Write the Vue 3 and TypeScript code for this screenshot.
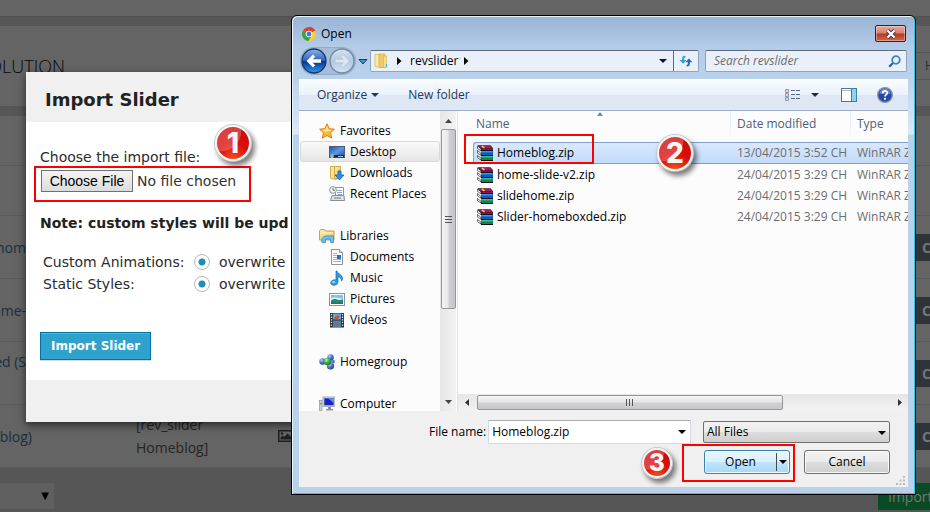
<script setup lang="ts">
import { ref } from 'vue'

interface Place {
  label: string
  icon: string
  root?: boolean
  spaced?: boolean
}

interface ArchiveFile {
  name: string
  modified: string
  type: string
}

const places: Place[] = [
  { label: 'Favorites', icon: 'star', root: true },
  { label: 'Desktop', icon: 'desktop' },
  { label: 'Downloads', icon: 'downloads' },
  { label: 'Recent Places', icon: 'recent' },
  { label: 'Libraries', icon: 'libraries', root: true, spaced: true },
  { label: 'Documents', icon: 'documents' },
  { label: 'Music', icon: 'music' },
  { label: 'Pictures', icon: 'pictures' },
  { label: 'Videos', icon: 'videos' },
  { label: 'Homegroup', icon: 'homegroup', root: true, spaced: true },
  { label: 'Computer', icon: 'computer', root: true, spaced: true },
]

const files: ArchiveFile[] = [
  { name: 'Homeblog.zip', modified: '13/04/2015 3:52 CH', type: 'WinRAR ZIP' },
  { name: 'home-slide-v2.zip', modified: '24/04/2015 3:29 CH', type: 'WinRAR ZIP' },
  { name: 'slidehome.zip', modified: '24/04/2015 3:29 CH', type: 'WinRAR ZIP' },
  { name: 'Slider-homeboxded.zip', modified: '24/04/2015 3:29 CH', type: 'WinRAR ZIP' },
]

const place = ref('Desktop')
const fileName = ref('Homeblog.zip')
const filter = ref('All Files')
const animations = ref('overwrite')
const styles = ref('overwrite')
</script>

<template>
  <div class="page">
    <svg class="sprite" aria-hidden="true">
      <defs>
        <linearGradient id="g-blue" x1="0" y1="0" x2="0" y2="1">
          <stop offset="0" stop-color="#8fb4e4" /><stop offset=".48" stop-color="#2a62bd" />
          <stop offset=".52" stop-color="#08338f" /><stop offset="1" stop-color="#2f9df0" />
        </linearGradient>
        <linearGradient id="g-pale" x1="0" y1="0" x2="0" y2="1">
          <stop offset="0" stop-color="#d5e1ef" /><stop offset=".5" stop-color="#b4c8df" />
          <stop offset="1" stop-color="#d3e2f3" />
        </linearGradient>
        <linearGradient id="g-folder" x1="0" y1="0" x2="1" y2="1">
          <stop offset="0" stop-color="#fbeeb0" /><stop offset="1" stop-color="#e3bf57" />
        </linearGradient>
        <linearGradient id="g-screen" x1="0" y1="0" x2="1" y2="1">
          <stop offset="0" stop-color="#1c4fae" /><stop offset=".5" stop-color="#5f97e2" />
          <stop offset="1" stop-color="#153f92" />
        </linearGradient>
        <radialGradient id="g-ball" cx=".35" cy=".3" r=".8">
          <stop offset="0" stop-color="#b8ccff" /><stop offset=".5" stop-color="#4a6fd0" />
          <stop offset="1" stop-color="#1a348c" />
        </radialGradient>
        <radialGradient id="g-green" cx=".35" cy=".3" r=".8">
          <stop offset="0" stop-color="#b4f0a8" /><stop offset=".5" stop-color="#38ae40" />
          <stop offset="1" stop-color="#127022" />
        </radialGradient>
      </defs>
      <symbol id="i-star" viewBox="0 0 16 16">
        <path d="M8 .8l2.200 4.900 5.200.5-3.900 3.600 1.200 5.400L8 12.500l-4.700 2.700 1.200-5.400L.6 6.200l5.200-.5z" fill="#fbb93a" stroke="#e07d12" stroke-width="1" />
        <path d="M8 2.800l1.400 3.800 3.600.4-6.400 2-3.400-2 3.400-.4z" fill="#fde29a" />
      </symbol>
      <symbol id="i-desktop" viewBox="0 0 16 16">
        <rect x=".5" y="2.500" width="15" height="11" fill="url(#g-screen)" stroke="#4b5d7a" />
        <rect x="1" y="11" width="14" height="2.500" fill="#1a2c50" />
        <circle cx="3" cy="12" r="2" fill="#5cc0f0" /><rect x="2" y="12" width="2" height="2" fill="#e8b23a" />
        <rect x="9" y="12" width="5" height="1" fill="#a7c0e8" />
      </symbol>
      <symbol id="i-downloads" viewBox="0 0 16 16">
        <path d="M1.500 1.500h5l1 1.500v11.500l-6-1z" fill="#f7e49b" stroke="#d5ac4a" />
        <path d="M5.500 1.500h6v12h-6z" fill="url(#g-folder)" stroke="#d3a846" />
        <path d="M9 6h3v4h3l-4.500 5L6 10h3z" fill="#2f8fe0" stroke="#1462ae" stroke-width=".8" />
      </symbol>
      <symbol id="i-recent" viewBox="0 0 16 16">
        <path d="M6.500 1.500h8v11h-8z" fill="#fff" stroke="#8f959c" />
        <path d="M8 4.500h5M8 6.500h5M9 8.500h4" stroke="#8fa9c8" />
        <path d="M3 9.500h12l.5 5H1.500z" fill="#dfe3e8" stroke="#868d95" />
        <path d="M5 12h7" stroke="#6f7881" />
        <circle cx="4" cy="4" r="3.400" fill="#f4f7fa" stroke="#8a929b" /><path d="M4 2v2.300h1.800" fill="none" stroke="#444" stroke-width=".8" />
      </symbol>
      <symbol id="i-libraries" viewBox="0 0 16 16">
        <path d="M.5 3l1-1.500h4l1 1.500h8.500v9H.5z" fill="url(#g-folder)" stroke="#cda43e" />
        <path d="M2 5h12" stroke="#fff6cc" />
        <path d="M3 14.500c-1-4 1-6.500 5-6.500h6.500v6.500h-3v-3.500H6.500v3.500z" fill="#6fc4ee" stroke="#2e8bc2" stroke-width=".8" />
      </symbol>
      <symbol id="i-documents" viewBox="0 0 16 16">
        <path d="M2.500.5h8l3 3v12h-11z" fill="#fff" stroke="#8c949e" />
        <path d="M10.500.5v3h3" fill="#dfe6ee" stroke="#8c949e" />
        <path d="M4 4.500h4M4 6.500h4M4 8.500h4M4 10.500h8M4 12.500h8" stroke="#9bb2d0" />
        <rect x="8" y="6" width="4" height="4" fill="#2f6fc2" />
      </symbol>
      <symbol id="i-music" viewBox="0 0 16 16">
        <path d="M8 1c.5 3 5 3.500 5.500 7 .1 1.500-.5 2.500-1 3 .2-2.500-1.500-4-3.500-4.300V12c0 2-1.800 3.300-4 3.300-2 0-3.300-1-3.300-2.500 0-1.800 1.800-3 3.800-3 .7 0 1.200.1 1.500.3V1z" fill="#2f9be2" stroke="#1670b4" stroke-width=".7" />
        <ellipse cx="4.600" cy="12" rx="1.800" ry="1" fill="#9bd6fa" />
      </symbol>
      <symbol id="i-pictures" viewBox="0 0 16 16">
        <rect x=".5" y="2.500" width="15" height="12" fill="#fff" stroke="#8d939a" />
        <rect x="2" y="4" width="12" height="9" fill="#79c3f0" />
        <path d="M2 7.500c3-1.500 5-1 12 .5v3H2z" fill="#e0f3fb" />
        <path d="M2 9.500c3-2 5-1.800 7-.8 2 .8 3.500.2 5-.7v5H2z" fill="#2c8a62" /><path d="M2 11.500h12v1.500H2z" fill="#2566a8" />
      </symbol>
      <symbol id="i-videos" viewBox="0 0 16 16">
        <rect x="1" y="1" width="14" height="14.500" fill="#2d2f33" />
        <rect x="4" y="1.500" width="8" height="6" fill="#5ea9dd" /><rect x="4" y="8.500" width="8" height="6.500" fill="#3d86c5" />
        <path d="M5 7c1-4 4-4 6-3l-2 3zM5 14c0-3 3-4 6-3l-2 3z" fill="#c8552b" />
        <path d="M2.500 2v13M13.500 2v13" stroke="#e3e6ea" stroke-width="1.400" stroke-dasharray="1.300 1.300" />
      </symbol>
      <symbol id="i-homegroup" viewBox="0 0 16 16">
        <circle cx="3.600" cy="7.500" r="3.300" fill="url(#g-ball)" /><circle cx="11.500" cy="3.500" r="3.200" fill="url(#g-ball)" />
        <circle cx="11.500" cy="12" r="3.600" fill="url(#g-ball)" /><circle cx="14" cy="7.500" r="2" fill="#5a80dc" />
        <circle cx="8.500" cy="7.500" r="3.700" fill="url(#g-green)" />
      </symbol>
      <symbol id="i-computer" viewBox="0 0 16 16">
        <rect x="4" y="1" width="12" height="9.500" fill="#d6dade" stroke="#9aa0a6" stroke-width=".8" />
        <rect x="5.300" y="2.300" width="9.400" height="7" fill="#1324c4" /><path d="M9 2.300h5.700v5z" fill="#6e86f2" />
        <path d="M9 11h3v2h2v1.500H7V13h2z" fill="#8c9299" />
        <rect x=".5" y="4.500" width="2.500" height="10" fill="#cfd3d8" stroke="#8c9299" stroke-width=".7" /><rect x="1" y="7" width="1.500" height="1.500" fill="#49b13a" />
      </symbol>
      <symbol id="i-archive" viewBox="0 0 16 16">
        <path d="M1 1h12.500L16 4v1.500H4z" fill="#8c1257" />
        <path d="M1 .5h12.500L16 3.500H4z" fill="#a81a6c" stroke="#2a0a1c" stroke-width=".5" />
        <path d="M4 6h12v4H4z" fill="#1456c4" /><path d="M4 6.800h11.500" stroke="#58b0f4" />
        <path d="M4 11h12v4H4z" fill="#0e8457" /><path d="M4 11.800h11.500" stroke="#59d8a2" />
        <path d="M.5 1l3.500 3v1.700L.5 3.500zM.5 5.500L4 8.500v1.700L.5 8zM.5 10.500L4 13.300V15L.5 12.700z" fill="#fff" stroke="#111" stroke-width=".6" />
        <path d="M4 5.500h12M4 10.500h12M4 15.500h12" stroke="#111" />
        <path d="M5 1.200l2.500 1.600" stroke="#f4d83a" stroke-width="1.600" />
      </symbol>
    </svg>

    <!-- Dimmed admin screen behind the modal -->
    <div class="admin">
      <div class="topbar"></div>
      <header class="heading">
        <div class="heading-clip"><h1>OLUTION</h1></div>
        <a class="heading-link" href="#">H</a>
      </header>
      <div class="sliders">
        <div class="slider-row short"></div>
        <div class="slider-row short"></div>
        <div class="slider-row">
          <div class="slider-name"><a href="#">hom</a></div>
          <button class="slider-btn" type="button">C</button>
        </div>
        <div class="slider-row">
          <div class="slider-name"><a href="#">ome-</a></div>
          <button class="slider-btn" type="button">C</button>
        </div>
        <div class="slider-row">
          <div class="slider-name raised"><a href="#">ed (S</a></div>
          <button class="slider-btn" type="button">C</button>
        </div>
        <div class="slider-row">
          <div class="slider-name last"><a href="#">blog)</a></div>
          <div class="slider-code">[rev_slider Homeblog]</div>
          <svg class="slider-pic" viewBox="0 0 16 12" aria-hidden="true">
            <rect x=".75" y=".75" width="14.500" height="10.500" fill="none" stroke="#1d1f21" stroke-width="1.500" />
            <path d="M2.500 9.500V7.500l2-2 1.500 1.500 3.500-3.500 4 4v2z" fill="#1d1f21" /><circle cx="4" cy="3.500" r="1.200" fill="#1d1f21" />
          </svg>
          <button class="slider-btn" type="button">C</button>
        </div>
      </div>
      <div class="admin-foot">
        <button class="page-size" type="button" aria-label="Rows per page">▼</button>
        <button class="import-btn" type="button">Import</button>
      </div>
    </div>

    <!-- Import form -->
    <form class="modal" @submit.prevent>
      <h2 class="modal-title">Import Slider</h2>
      <div class="modal-body">
        <label class="line" for="import-file">Choose the import file:</label>
        <input id="import-file" class="file" type="file" />
        <p class="note">Note: custom styles will be upd</p>
        <div class="option">
          <span class="option-name">Custom Animations:</span>
          <label><input v-model="animations" type="radio" name="animations" value="overwrite" />overwrite</label>
        </div>
        <div class="option">
          <span class="option-name">Static Styles:</span>
          <label><input v-model="styles" type="radio" name="styles" value="overwrite" />overwrite</label>
        </div>
        <button class="primary" type="submit">Import Slider</button>
      </div>
      <div class="modal-foot"></div>
      <div class="mark mark-file"></div>
      <div class="badge badge-1">1</div>
    </form>

    <!-- File picker window -->
    <section class="dialog" role="dialog" aria-label="Open">
      <div class="titlebar">
        <svg class="chrome" viewBox="0 0 14 14" aria-hidden="true">
          <circle cx="7" cy="7" r="7" fill="#f6cf2e" />
          <path d="M7 7L.94 3.500A7 7 0 0 1 13.060 3.500z" fill="#dd4132" />
          <path d="M7 0a7 7 0 0 1 6.300 4H7z" fill="#dd4132" />
          <path d="M.94 3.500A7 7 0 0 0 6.500 14L9.600 8.500 7 7z" fill="#38a04a" />
          <circle cx="7" cy="7" r="3.300" fill="#fff" /><circle cx="7" cy="7" r="2.400" fill="#3b78d8" />
        </svg>
        <span class="title-text">Open</span>
        <button class="close" type="button" aria-label="Close">
          <svg viewBox="0 0 12 10" aria-hidden="true">
            <path d="M2.500 1.500l7 7M9.500 1.500l-7 7" stroke="#4a2a30" stroke-width="4" />
            <path d="M2.500 1.500l7 7M9.500 1.500l-7 7" stroke="#fff" stroke-width="2.400" />
          </svg>
        </button>
      </div>

      <div class="navbar">
        <div class="travel">
          <button type="button" aria-label="Back">
            <svg viewBox="0 0 26 26" aria-hidden="true">
              <circle cx="13" cy="13" r="12" fill="url(#g-blue)" stroke="#1c3763" stroke-width="1.300" />
              <path d="M5.500 13l6.500-6.500 2.200 2.200-2.500 2.500H20v3.600h-8.300l2.500 2.500-2.200 2.200z" fill="#fff" />
            </svg>
          </button>
          <button type="button" aria-label="Forward">
            <svg viewBox="0 0 26 26" aria-hidden="true">
              <circle cx="13" cy="13" r="12" fill="url(#g-pale)" stroke="#73889f" stroke-width="1.300" />
              <path d="M20.500 13L14 6.500l-2.200 2.200 2.500 2.500H6v3.600h8.300l-2.500 2.500 2.200 2.200z" fill="#dfe7f1" stroke="#b4c3d4" stroke-width=".8" />
            </svg>
          </button>
        </div>
        <button class="history" type="button" aria-label="Recent pages">
          <svg viewBox="0 0 10 7" aria-hidden="true"><path d="M1 1.500h8L5 6z" fill="#3f97c8" stroke="#183e6c" /></svg>
        </button>
        <div class="address">
          <svg class="addr-folder" viewBox="0 0 14 16" aria-hidden="true">
            <path d="M1 1.500h5l1 13-6-1z" fill="#fbe9a0" stroke="#dcb95a" stroke-width=".8" />
            <path d="M5 1h6v13.500H5z" fill="#eecb68" stroke="#d5b04f" stroke-width=".8" /><path d="M9.500 3h3v11.500h-3z" fill="#f7dd8a" stroke="#d5b04f" stroke-width=".6" />
            <path d="M12.500 11v3" stroke="#3ca4d8" />
          </svg>
          <svg class="crumb" viewBox="0 0 5 8" aria-hidden="true"><path d="M0 0l4.500 4L0 8z" fill="#000" /></svg>
          <span>revslider</span>
          <svg class="crumb" viewBox="0 0 5 8" aria-hidden="true"><path d="M0 0l4.500 4L0 8z" fill="#000" /></svg>
          <button class="addr-drop" type="button" aria-label="Previous locations">
            <svg viewBox="0 0 8 4" aria-hidden="true"><path d="M0 0h8L4 4z" fill="#0b0b57" /></svg>
          </button>
          <button class="refresh" type="button" aria-label="Refresh">
            <svg viewBox="0 0 14 12" aria-hidden="true">
              <path d="M6 .8C3.500.8 3.200 2 3.200 5H.5l3.700 3.700L7.500 5H5.200c0-2 .1-2.800 1.800-3z" fill="#3b9bd6" />
              <path d="M8 11.500c2.500 0 2.900-1.500 2.900-4.300h2.600L9.900 3.500 6.500 7.200h2.400c0 2-.1 2.900-1.700 3.100z" fill="#2866b4" />
            </svg>
          </button>
        </div>
        <label class="search">
          <input type="search" placeholder="Search revslider" aria-label="Search revslider" />
          <svg viewBox="0 0 13 13" aria-hidden="true">
            <circle cx="8" cy="5" r="3.800" fill="#e8f4fc" stroke="#3b84cc" stroke-width="1.800" /><path d="M5 8l-3.800 3.800" stroke="#2b5fae" stroke-width="2.200" />
          </svg>
        </label>
      </div>

      <div class="toolbar">
        <button class="tool organize" type="button">Organize
          <svg viewBox="0 0 8 4" aria-hidden="true"><path d="M0 0h8L4 4z" fill="#1e3a5f" /></svg>
        </button>
        <button class="tool" type="button">New folder</button>
        <div class="tool-icons">
          <button type="button" aria-label="Change your view">
            <svg width="16" height="14" viewBox="0 0 16 14" aria-hidden="true">
              <path d="M.5 1.500h3v3h-3zM.5 5.500h3v3h-3zM.5 9.500h3v3h-3z" fill="#fff" stroke="#8e9bb0" />
              <path d="M1.500 3h1" stroke="#3d9a4c" /><path d="M1.500 7h1" stroke="#d03a2c" /><path d="M1.500 11h1" stroke="#2d62c4" />
              <path d="M6 2.500h10M6 6.500h10M6 10.500h10" stroke="#5c6b84" stroke-dasharray="4 1" />
            </svg>
          </button>
          <button class="view-drop" type="button" aria-label="More view options">
            <svg width="8" height="4" viewBox="0 0 8 4" aria-hidden="true"><path d="M0 0h8L4 4z" fill="#1e2c45" /></svg>
          </button>
          <button class="pane" type="button" aria-label="Show the preview pane">
            <svg width="16" height="14" viewBox="0 0 16 14" aria-hidden="true">
              <rect x=".5" y=".5" width="15" height="13" fill="#fff" stroke="#5a7290" /><path d="M1 2.500h9" stroke="#a9b9cc" />
              <rect x="10.500" y=".5" width="5" height="13" fill="#8fd2ea" stroke="#3a7fa6" />
            </svg>
          </button>
          <button type="button" aria-label="Get help">
            <svg width="16" height="16" viewBox="0 0 16 16" aria-hidden="true">
              <circle cx="8" cy="8" r="7.300" fill="#2747ae" stroke="#8791a3" stroke-width="1.400" />
              <path d="M2.500 7a5.500 5.500 0 0 1 11 0z" fill="#6484d6" />
              <path d="M5.700 6.200c0-3 4.600-3 4.600-.3 0 1.700-2.300 1.800-2.300 3.600" fill="none" stroke="#fff" stroke-width="1.700" /><circle cx="8" cy="11.800" r="1.100" fill="#fff" />
            </svg>
          </button>
        </div>
      </div>

      <div class="panes">
        <nav class="tree" aria-label="Places">
          <ul>
            <li v-for="p in places" :key="p.label" :class="{ root: p.root, spaced: p.spaced, current: p.label === place }">
              <a href="#" @click.prevent="place = p.label">
                <svg aria-hidden="true"><use :href="'#i-' + p.icon" /></svg>{{ p.label }}
              </a>
            </li>
          </ul>
        </nav>
        <div class="vscroll" aria-hidden="true">
          <svg viewBox="0 0 7 4"><path d="M0 4h7L3.500 0z" fill="#444" /></svg>
          <div class="vthumb"><i></i><i></i><i></i></div>
          <svg viewBox="0 0 7 4"><path d="M0 0h7L3.500 4z" fill="#444" /></svg>
        </div>
        <div class="files">
          <svg class="sorted" viewBox="0 0 6 4" aria-hidden="true"><path d="M0 4h6L3 0z" fill="#5d93b8" /></svg>
          <table>
            <thead>
              <tr><th class="c-name">Name</th><th class="c-date">Date modified</th><th class="c-type">Type</th></tr>
            </thead>
            <tbody>
              <tr v-for="f in files" :key="f.name" :class="{ picked: f.name === fileName }" @click="fileName = f.name">
                <td><span class="entry"><svg aria-hidden="true"><use href="#i-archive" /></svg>{{ f.name }}</span></td>
                <td class="meta">{{ f.modified }}</td>
                <td class="meta">{{ f.type }}</td>
              </tr>
            </tbody>
          </table>
          <div class="hscroll" aria-hidden="true">
            <svg viewBox="0 0 4 7"><path d="M4 0v7L0 3.500z" fill="#333" /></svg>
            <div class="htrack"><div class="hthumb"><i></i><i></i><i></i></div></div>
            <svg viewBox="0 0 4 7"><path d="M0 0v7l4-3.500z" fill="#333" /></svg>
          </div>
          <div class="mark mark-entry"></div>
          <div class="badge badge-2">2</div>
        </div>
      </div>

      <div class="actions">
        <div class="action-row">
          <label for="file-name">File name:</label>
          <div class="name-box">
            <input id="file-name" v-model="fileName" type="text" />
            <button type="button" aria-label="Previous file names">
              <svg viewBox="0 0 8 4" aria-hidden="true"><path d="M0 0h8L4 4z" fill="#000" /></svg>
            </button>
          </div>
          <div class="filter">
            <select v-model="filter" aria-label="File type"><option>All Files</option></select>
            <svg viewBox="0 0 8 4" aria-hidden="true"><path d="M0 0h8L4 4z" fill="#000" /></svg>
          </div>
        </div>
        <div class="action-row buttons">
          <div class="split">
            <button class="split-main" type="button">Open</button>
            <button class="split-drop" type="button" aria-label="Open options">
              <svg viewBox="0 0 8 4" aria-hidden="true"><path d="M0 0h8L4 4z" fill="#000" /></svg>
            </button>
          </div>
          <button class="cancel" type="button">Cancel</button>
        </div>
        <svg class="grip" viewBox="0 0 9 9" aria-hidden="true">
          <path d="M7 0h2v2H7zM7 3.500h2v2H7zM7 7h2v2H7zM3.500 3.500h2v2h-2zM3.500 7h2v2h-2zM0 7h2v2H0z" fill="#bcbcbc" />
        </svg>
        <div class="mark mark-open"></div>
        <div class="badge badge-3">3</div>
      </div>
    </section>
  </div>
</template>

<style>
body {
  background: #565656;
}
</style>

<style scoped>
* {
  box-sizing: border-box;
}
.page {
  position: relative;
  min-height: 100vh;
  overflow: hidden;
  font-family: 'Open Sans', 'Noto Sans', sans-serif;
}
.sprite {
  position: absolute;
  width: 0;
  height: 0;
}
button {
  margin: 0;
  padding: 0;
  border: 0;
  background: none;
  font: inherit;
  color: inherit;
}
a {
  color: inherit;
  text-decoration: none;
}
svg {
  display: block;
  flex: none;
}

/* admin screen */
.topbar {
  height: 17px;
  background: #646464;
  border-bottom: 1px solid #505050;
}
.heading {
  display: flex;
  justify-content: space-between;
  align-items: center;
  height: 80px;
  margin: 9px 0 10px;
  background: #646464;
}
.heading-clip {
  display: flex;
  justify-content: flex-end;
  width: 65px;
  overflow: hidden;
}
.heading h1 {
  margin: 0;
  font-size: 18px;
  font-weight: 300;
  line-height: 28px;
  color: #080808;
}
.heading-link {
  width: 24px;
  padding-left: 19px;
  border: solid #555;
  border-width: 1px 0;
  font-size: 12px;
  line-height: 26px;
  color: #26323a;
  overflow: hidden;
}
.sliders {
  background: #646464;
}
.slider-row {
  display: flex;
  align-items: center;
  height: 63px;
  border-bottom: 1px solid #5a5a5a;
  font-size: 14px;
}
.slider-row.short {
  height: 50px;
}
.slider-name {
  display: flex;
  justify-content: flex-end;
  width: 26px;
  overflow: hidden;
  white-space: nowrap;
  color: #18313f;
}
.slider-name.raised {
  padding-bottom: 24px;
}
.slider-name.last {
  width: 32px;
}
.slider-code {
  width: 90px;
  margin: 0 52px 0 104px;
  line-height: 23px;
  color: #262626;
}
.slider-pic {
  width: 16px;
  height: 12px;
}
.slider-btn {
  width: 20px;
  height: 27px;
  margin-left: auto;
  padding-left: 12px;
  background: #303438;
  font-weight: 700;
  text-align: left;
  color: #71767a;
  overflow: hidden;
}
.admin-foot {
  display: flex;
  justify-content: space-between;
  padding-top: 15px;
}
.page-size {
  width: 54px;
  height: 26px;
  padding: 0 5px 2px 0;
  background: #5f5f5f;
  font-family: 'DejaVu Sans', sans-serif;
  font-size: 10px;
  text-align: right;
  color: #000;
}
.import-btn {
  width: 52px;
  height: 27px;
  padding-left: 10px;
  background: #0a4a25;
  font-size: 14px;
  line-height: 20px;
  text-align: left;
  white-space: nowrap;
  color: #6d7a72;
  overflow: hidden;
}

/* import form */
.modal {
  position: absolute;
  top: 72px;
  left: 26px;
  right: 26px;
  background: #fff;
  box-shadow: 0 3px 8px rgba(0, 0, 0, 0.6);
  font-family: 'DejaVu Sans', Verdana, sans-serif;
  font-size: 14px;
  line-height: 22px;
  color: #2b2b2b;
}
.modal-title {
  margin: 0;
  padding: 17px 19px 11px;
  background: #f0f0f0;
  font-size: 18px;
  font-weight: 700;
  line-height: 22px;
  color: #222;
}
.modal-body {
  padding: 24px 14px 20px;
}
.line {
  display: block;
}
.file {
  display: block;
  margin: 2px 0 0 1px;
  font: inherit;
  color: #333;
}
.file::file-selector-button {
  width: 92px;
  height: 22px;
  margin: 0 4px 0 0;
  padding: 0;
  border: 1px solid #707070;
  border-radius: 0;
  background: linear-gradient(#f4f4f4, #dcdcdc);
  font-family: 'Liberation Sans', Arial, sans-serif;
  font-size: 14px;
  line-height: 18px;
  color: #000;
}
.note {
  margin: 20px 0 17px;
  font-weight: 700;
  white-space: nowrap;
  color: #222;
}
.option {
  display: flex;
  padding-left: 3px;
}
.option-name {
  width: 151px;
}
.option label {
  display: flex;
  align-items: center;
  gap: 9px;
}
.option input {
  appearance: none;
  width: 16px;
  height: 16px;
  margin: 0;
  border: 1px solid #b4b9be;
  border-radius: 50%;
  background: radial-gradient(circle, #1e8cbe 0 3px, #fff 4px);
}
.primary {
  display: block;
  height: 28px;
  margin-top: 37px;
  padding: 0 10px;
  border: 1px solid #0074a2;
  background: #2ea2cc;
  box-shadow: inset 0 1px 0 rgba(120, 200, 230, 0.5), 0 1px 0 rgba(0, 0, 0, 0.15);
  font-size: 12px;
  font-weight: 700;
  color: #fff;
}
.modal-foot {
  height: 42px;
  background: #f0f0f0;
}

/* file picker */
.dialog {
  position: absolute;
  top: 15px;
  left: 291px;
  right: 14px;
  padding: 1px 7px 7px;
  border: 1px solid #000;
  border-radius: 6px 6px 0 0;
  background: linear-gradient(#98b4d4, #b4cce8 32px, #bad1eb 60px, #dbe8f6 118px, #b9d1ea 119px);
  box-shadow: inset 1px 1px 0 #e8f4fc, inset -1px -1px 0 #31c5e6;
  font-size: 12px;
  line-height: 16px;
  color: #000;
}
.titlebar {
  display: flex;
  align-items: center;
  height: 33px;
  padding: 0 2px 0 3px;
}
.chrome {
  width: 14px;
  height: 14px;
}
.title-text {
  margin-left: 5px;
}
.close {
  display: flex;
  align-items: center;
  justify-content: center;
  width: 31px;
  height: 17px;
  margin-left: auto;
  border: 1px solid #4c1620;
  border-radius: 2px;
  background: linear-gradient(#e5a99c, #d58271 48%, #b43a20 52%, #d1694f);
  box-shadow: inset 0 0 0 1px rgba(255, 255, 255, 0.35);
}
.close svg {
  width: 12px;
  height: 10px;
}
.navbar {
  display: flex;
  align-items: center;
  height: 22px;
  margin: 0 1px 7px 0;
}
.travel {
  display: flex;
  gap: 2px;
  margin-left: 2px;
  border-radius: 13px;
  background: #a5bddb;
  box-shadow: 0 0 0 1px #93acca;
}
.travel svg {
  width: 26px;
  height: 26px;
}
.history {
  margin: 0 2px 0 3px;
}
.history svg {
  width: 10px;
  height: 7px;
}
.address,
.search {
  display: flex;
  align-items: center;
  height: 22px;
  border: 1px solid #8ea4bf;
  border-top-color: #5c6a7e;
  border-radius: 2px;
  background: #e9f0fa;
}
.address {
  flex: 1;
  margin-right: 6px;
}
.addr-folder {
  width: 14px;
  height: 16px;
  margin: 0 9px 0 3px;
}
.crumb {
  width: 5px;
  height: 8px;
}
.address span {
  margin: 0 6px 0 8px;
}
.addr-drop {
  display: flex;
  align-items: center;
  height: 20px;
  margin-left: auto;
  padding: 0 6px;
}
.addr-drop svg,
.organize svg,
.name-box svg,
.filter svg,
.split svg {
  width: 8px;
  height: 4px;
}
.refresh {
  display: flex;
  align-items: center;
  justify-content: center;
  width: 25px;
  height: 20px;
  border-left: 1px solid #5c6a7e;
}
.refresh svg {
  width: 14px;
  height: 12px;
}
.search {
  width: 202px;
  padding-right: 5px;
}
.search input {
  flex: 1;
  min-width: 0;
  padding: 0 0 0 8px;
  border: 0;
  background: none;
  outline: 0;
  font: inherit;
  font-style: italic;
}
.search input::placeholder {
  color: #6d6d6d;
}
.search svg {
  width: 13px;
  height: 13px;
}
.toolbar {
  display: flex;
  align-items: center;
  gap: 29px;
  height: 32px;
  padding: 0 15px 0 18px;
  border-bottom: 1px solid #a0afc3;
  background: linear-gradient(#fafcfe, #eaf2fb 50%, #dce6f4 52%, #dfe9f6);
  box-shadow: inset 0 1px 0 #fff;
  color: #1e395b;
}
.organize {
  display: flex;
  align-items: center;
  gap: 4px;
}
.tool-icons {
  display: flex;
  align-items: center;
  margin-left: auto;
}
.view-drop {
  margin: 0 22px 0 10px;
}
.pane {
  margin-right: 20px;
}
.panes {
  display: flex;
  height: 300px;
  background: #fcfcfc;
}
.tree {
  width: 141px;
  padding: 9px 0 0 1px;
  overflow: hidden;
}
.tree ul {
  margin: 0;
  padding: 0;
  list-style: none;
}
.tree li {
  padding-left: 28px;
  border: 1px solid transparent;
  border-radius: 3px;
}
.tree li.root {
  padding-left: 18px;
}
.tree li.spaced {
  margin-top: 21px;
}
.tree li.current {
  border-color: #d9d9d9;
  background: linear-gradient(#fafafa, #e6e6e6);
}
.tree a {
  display: flex;
  align-items: center;
  gap: 5px;
  height: 19px;
  white-space: nowrap;
}
.tree svg,
.entry svg {
  width: 16px;
  height: 16px;
}
.vscroll {
  display: flex;
  flex-direction: column;
  align-items: center;
  width: 16px;
  padding: 8px 0 7px;
  background: linear-gradient(90deg, #e6e6e6, #f2f2f2);
}
.vscroll > svg {
  width: 7px;
  height: 4px;
}
.vthumb {
  display: flex;
  flex-direction: column;
  align-items: center;
  justify-content: center;
  gap: 2px;
  width: 15px;
  height: 180px;
  margin: 6px 0 auto;
  border: 1px solid #979797;
  border-radius: 2px;
  background: linear-gradient(90deg, #f5f5f5, #e6e6e8 48%, #d2d2d5 52%, #c4c4c8);
}
.vthumb i {
  width: 7px;
  height: 1px;
  background: #555;
}
.files {
  position: relative;
  display: flex;
  flex: 1;
  flex-direction: column;
  min-width: 0;
  margin-left: 1px;
  border-left: 1px solid #d6e5f5;
}
.sorted {
  position: absolute;
  top: 1px;
  left: 139px;
  width: 6px;
  height: 4px;
}
.files table {
  width: calc(100% - 15px);
  margin-left: 15px;
  table-layout: fixed;
  border-collapse: separate;
  border-spacing: 0;
}
.files th {
  height: 31px;
  padding: 0 7px 5px;
  background: linear-gradient(#dfebf7, #f4f8fc) 0 0 / 1px 24px no-repeat;
  font-weight: 400;
  text-align: left;
  color: #4c607a;
}
.files th.c-name {
  padding-left: 3px;
  background: none;
}
.c-date {
  width: 120px;
}
.c-type {
  width: 58px;
}
.files td {
  height: 21px;
  padding: 0;
  white-space: nowrap;
}
.files td.meta {
  padding-left: 7px;
  overflow: hidden;
  color: #6d6d6d;
}
.entry {
  display: flex;
  align-items: center;
  gap: 4px;
  padding-left: 4px;
}
.files .picked td {
  height: 22px;
  background: linear-gradient(#dce9fc, #c1dafb);
  box-shadow: inset 0 1px 0 #7da2ce, inset 0 -1px 0 #7da2ce;
}
.files .picked td:first-child {
  border-radius: 3px 0 0 3px;
  box-shadow: inset 1px 1px 0 #7da2ce, inset 0 -1px 0 #7da2ce;
}
.hscroll {
  display: flex;
  align-items: center;
  height: 17px;
  margin-top: auto;
  padding: 0 6px 0 7px;
  background: linear-gradient(#e6e6e6, #f2f2f2);
}
.hscroll > svg {
  width: 4px;
  height: 7px;
}
.htrack {
  flex: 1;
  margin: 0 8px;
}
.hthumb {
  display: flex;
  align-items: center;
  justify-content: center;
  gap: 2px;
  width: 74%;
  height: 15px;
  border: 1px solid #979797;
  border-radius: 2px;
  background: linear-gradient(#f5f5f5, #e4e4e6 48%, #d2d2d5 52%, #c8c8cc);
}
.hthumb i {
  width: 1px;
  height: 7px;
  background: #555;
}
.actions {
  position: relative;
  padding: 9px 18px 13px 130px;
  background: #f0f0f0;
}
.action-row {
  display: flex;
  align-items: center;
}
.name-box {
  display: flex;
  flex: 1;
  align-items: center;
  height: 24px;
  margin: 0 12px 0 2px;
  border: 1px solid #d5dbe3;
  border-top-color: #abadb3;
  background: #fff;
}
.name-box input {
  flex: 1;
  min-width: 0;
  padding: 0 0 0 3px;
  border: 0;
  outline: 0;
  background: none;
  font: inherit;
}
.name-box button {
  padding: 6px 4px;
}
.filter {
  position: relative;
  width: 187px;
}
.filter select {
  appearance: none;
  width: 100%;
  height: 22px;
  margin: 0;
  padding: 0 3px;
  border: 1px solid #707070;
  border-radius: 2px;
  background: linear-gradient(#f2f2f2, #ebebeb 50%, #dddddd 51%, #cfcfcf);
  font: inherit;
  color: #000;
}
.filter svg {
  position: absolute;
  top: 10px;
  right: 4px;
  pointer-events: none;
}
.buttons {
  justify-content: flex-end;
  gap: 14px;
  margin-top: 6px;
}
.split,
.cancel {
  width: 86px;
  height: 24px;
  border: 1px solid #707070;
  border-radius: 3px;
  background: linear-gradient(#f2f2f2, #ebebeb 49%, #dddddd 51%, #cfcfcf);
  box-shadow: inset 0 0 0 1px rgba(255, 255, 255, 0.8);
}
.split {
  display: flex;
  align-items: center;
  border-color: #3c7fb1;
  background: linear-gradient(#eaf6fd, #d9f0fc 49%, #bee6fd 51%, #a7d9f5);
}
.split-main {
  flex: 1;
}
.split-drop {
  display: flex;
  align-items: center;
  height: 18px;
  padding: 0 2px;
  border-left: 1px solid #4a4a4a;
}
.grip {
  position: absolute;
  right: 3px;
  bottom: 2px;
  width: 9px;
  height: 9px;
}

/* walkthrough marks */
.mark {
  position: absolute;
  border: 2px solid #f00;
  pointer-events: none;
}
.mark-file {
  top: 94px;
  left: 8px;
  width: 217px;
  height: 36px;
}
.mark-entry {
  top: 23px;
  left: 6px;
  width: 130px;
  height: 30px;
}
.mark-open {
  top: 33px;
  right: 113px;
  width: 113px;
  height: 38px;
}
.badge {
  position: absolute;
  display: flex;
  align-items: center;
  justify-content: center;
  width: 36px;
  height: 36px;
  border: 2px solid #f3f3f3;
  border-radius: 50%;
  background:
    radial-gradient(ellipse at 15% 10%, rgba(255, 255, 255, 0.22) 0 50%, transparent 52%),
    radial-gradient(circle at 50% 100%, #f0501c, #dc0d0d 45%, #c80808);
  box-shadow: 0 0 0 1px #c9c9c9, 3px 4px 5px 1px rgba(0, 0, 0, 0.5);
  font-family: Inter, 'Liberation Sans', sans-serif;
  font-size: 28px;
  font-weight: 800;
  line-height: 32px;
  color: #f6f6f6;
}
.badge-1 {
  top: 53px;
  left: 189px;
}
.badge-2 {
  top: 24px;
  left: 199px;
}
.badge-3 {
  top: 37px;
  right: 236px;
  width: 30px;
  height: 30px;
  font-size: 24px;
}
</style>
